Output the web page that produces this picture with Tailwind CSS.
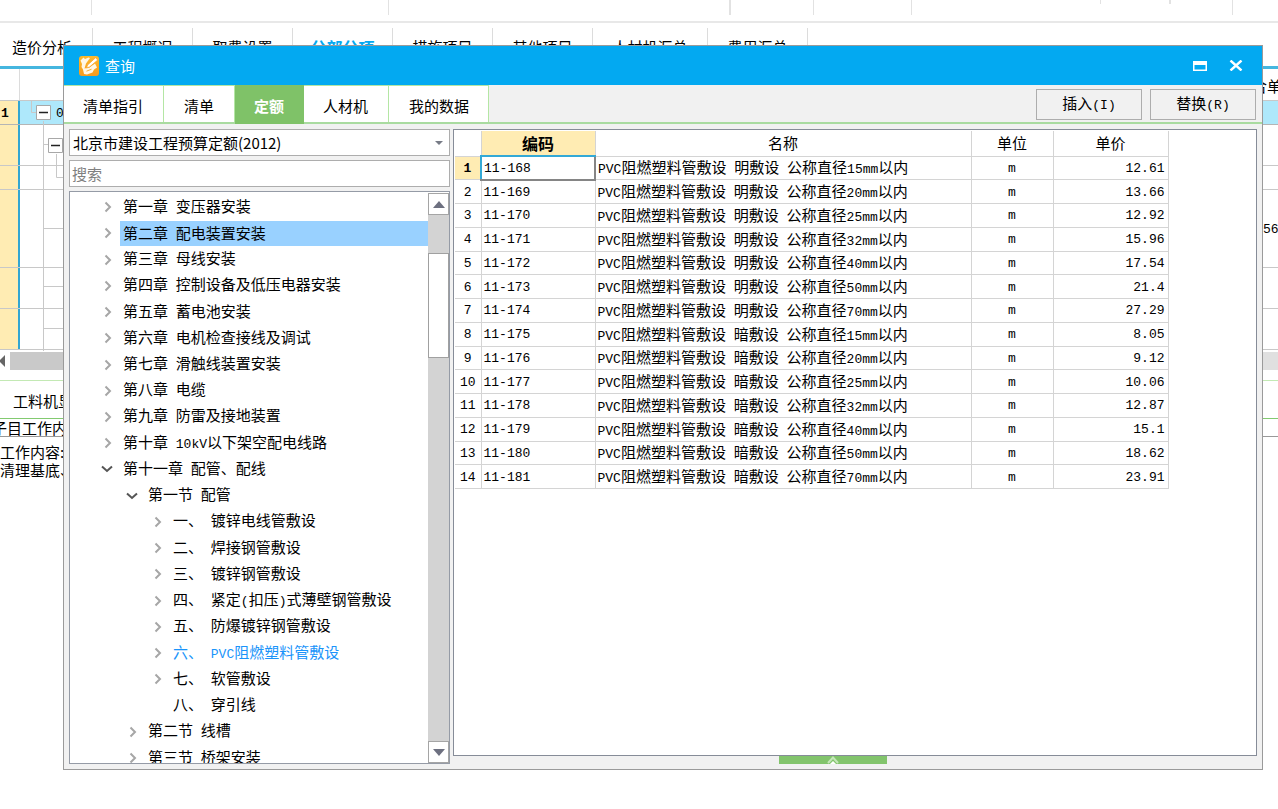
<!DOCTYPE html>
<html lang="zh-CN">
<head>
<meta charset="utf-8">
<title>查询</title>
<script src="https://cdn.jsdelivr.net/npm/@tailwindcss/browser@4"></script>
</head>
<body class="relative h-screen overflow-hidden bg-white font-['Noto_Sans_CJK_SC',sans-serif] text-[15px] leading-5 text-black">

<!-- Main window behind the dialog -->
<main class="flex h-full flex-col">
  <div class="relative h-[23px] shrink-0 border-b-2 border-[#e8e8e8]" aria-hidden="true">
    <svg class="absolute left-0 top-0" width="1278" height="15" fill="#e2e2e2">
      <path d="M91 0h1v15h-1zM388 0h1v15h-1zM729 0h2v15h-2zM813 0h1v15h-1zM911 0h1v15h-1zM1100 0h1v4h-1zM1169 0h2v4h-2zM1232 0h1v15h-1z"/>
    </svg>
  </div>
  <nav class="-ml-2 flex h-[43px] shrink-0 pt-[5px] whitespace-nowrap">
    <button class="w-[101px] border-r border-[#dcdcdc]">造价分析</button>
    <button class="w-[100px] border-r border-[#dcdcdc]">工程概况</button>
    <button class="w-[100px] border-r border-[#dcdcdc]">取费设置</button>
    <button class="w-[100px] border-r border-[#dcdcdc] text-base font-bold text-[#03a9f1]">分部分项</button>
    <button class="w-[100px] border-r border-[#dcdcdc]">措施项目</button>
    <button class="w-[100px] border-r border-[#dcdcdc]">其他项目</button>
    <button class="w-[115px] border-r border-[#dcdcdc]">人材机汇总</button>
    <button class="w-[100px] border-r border-[#dcdcdc]">费用汇总</button>
  </nav>
  <section class="relative shrink-0 border-t-3 border-[#45b6df]">
    <div class="flex h-8 border-b border-[#c8c8c8]">
      <div class="w-5 border-r border-[#dcdcdc]"></div>
      <div class="flex-1"></div>
      <div class="flex w-[41px] items-center whitespace-nowrap pt-0.5">综合单价</div>
    </div>
    <div class="flex h-6 border-b border-[#b5b5b5] bg-[#aee8fb]">
      <div class="flex w-5 items-center border-r-2 border-[#33a6d2] bg-[#ffecb3] pl-px pt-0.5 font-['Liberation_Mono',monospace] text-[13px] font-bold">1</div>
      <div class="flex flex-1 items-center pl-9 pt-0.5 font-['Liberation_Mono',monospace] text-[13px]">01</div>
    </div>
    <div class="flex h-[41px] border-b border-[#c8c8c8]"><div class="w-5 border-r-2 border-[#33a6d2] bg-[#ffecb3]"></div></div>
    <div class="flex h-6 border-b border-[#c8c8c8]"><div class="w-5 border-r-2 border-[#33a6d2] bg-[#ffecb3]"></div></div>
    <div class="flex h-[78px] items-stretch border-b border-[#c8c8c8]">
      <div class="w-5 border-r-2 border-[#33a6d2] bg-[#ffecb3]"></div>
      <div class="flex-1"></div>
      <div class="flex w-[15px] items-center pt-0.5 font-['Liberation_Mono',monospace] text-[13px]">56</div>
    </div>
    <div class="flex h-[41px] border-b border-[#c8c8c8]"><div class="w-5 border-r-2 border-[#33a6d2] bg-[#ffecb3]"></div></div>
    <div class="flex h-[41px] border-b border-[#c8c8c8]"><div class="w-5 border-r-2 border-[#33a6d2] bg-[#ffecb3]"></div></div>
    <svg class="absolute left-5 top-8" width="44" height="250" fill="none" stroke="#c8c8c8" aria-hidden="true">
      <path d="M11.500 0v11.500h5M23.500 20v230M24 43.500h6M36.500 53v23.500h8M24 127.500h20M24 185.500h20M24 227.500h20"/>
      <g stroke="#a8a8a8" fill="#fff"><path d="M16.500 4.500h14v14h-14zM28.500 37.500h14v14h-14z"/></g>
      <path stroke="#222" stroke-width="1.500" d="M19 11.500h9M31 44.500h9"/>
    </svg>
    <div class="mt-0.5 flex h-[18px] items-center bg-[#c9c9c9]">
      <div class="flex h-full w-2.5 items-center bg-white"><svg width="5" height="12" aria-hidden="true"><path d="M5 0v12L-1 6z" fill="#666"/></svg></div>
      <div class="flex-1"></div>
      <div class="h-full w-4 bg-[#e0e0e0]"></div>
    </div>
  </section>
  <section class="mt-[10px] border-t border-[#c3e9b4]">
    <div class="flex h-[38px] items-center border-b border-[#82ca70] pl-[13px] pt-0.5"><span>工料机显示</span></div>
    <div class="-ml-2 h-[18px] border-b border-[#999] leading-[18px]">子目工作内容</div>
    <div class="pt-1.5 leading-[18px]"><p>工作内容:</p><p>清理基底、</p></div>
  </section>
</main>

<!-- Query dialog -->
<div role="dialog" aria-labelledby="dlg-title" class="absolute bottom-[39px] left-[63px] right-[15px] top-[45px] flex flex-col border border-[#9a9a9a] bg-[#f1f1f1]">
  <header class="flex h-[39px] shrink-0 items-center bg-[#03a9f1] pl-[15px] pr-[19px] text-white">
    <svg width="20" height="20" viewBox="0 0 20 20" aria-hidden="true">
      <defs><linearGradient id="lg" x2="0" y2="1"><stop stop-color="#fcb92a"/><stop offset="1" stop-color="#f79a1e"/></linearGradient></defs>
      <rect width="20" height="20" rx="3" fill="url(#lg)"/>
      <path d="M1.500 4.500 4.500 1.500 6 3 9.500 1.500 11 2 7 7.500 5.500 12.500 10.500 11.500 16 7.500 18 11.500 15 13.500 13.500 16.500 8 18.500 5 18 4 13.500 2.500 11 3 8z" fill="#fff6e4"/>
      <path d="M16.500 1.800 18.800 4 10.500 11 7.500 12 8.500 9z" fill="#fff" stroke="#f7a32a" stroke-width=".8"/>
      <path d="M7.500 15.200 12.500 13.200" stroke="#f9ad35" stroke-width="1"/>
    </svg>
    <h1 id="dlg-title" class="ml-1.5 flex-1">查询</h1>
    <button aria-label="最大化" class="mr-[22px]"><svg width="14" height="10"><path d="M.75.750h12.500v8.500H.75z" fill="none" stroke="#fff" stroke-width="1.500"/><path d="M0 0h14v4H0z" fill="#fff"/></svg></button>
    <button aria-label="关闭"><svg width="14" height="11"><path d="M1.500.500 12.500 10.500M12.500.500 1.500 10.500" stroke="#fff" stroke-width="2.400"/></svg></button>
  </header>
  <div class="flex h-[39px] shrink-0 items-stretch border-b-2 border-[#a9dba0]">
    <button class="border-r border-t border-[#b4e6a4] bg-white pl-[19px] pr-5 pt-1">清单指引</button>
    <button class="border-r border-t border-[#b4e6a4] bg-white px-5 pt-1">清单</button>
    <button class="-mb-0.5 bg-[#7fc268] pl-[19px] pr-5 pb-0.5 pt-1 font-bold text-white">定额</button>
    <button class="border-r border-t border-[#b4e6a4] bg-white pl-[19px] pr-5 pt-1">人材机</button>
    <button class="border-r border-t border-[#b4e6a4] bg-white pl-5 pr-[19px] pt-1">我的数据</button>
    <div class="flex flex-1 justify-end gap-2 pb-0.5 pr-1.5 pt-1">
      <button class="w-[106px] border border-[#adadad]">插入<span class="font-['Liberation_Mono',monospace] text-[13px]">(I)</span></button>
      <button class="w-[106px] border border-[#adadad]">替换<span class="font-['Liberation_Mono',monospace] text-[13px]">(R)</span></button>
    </div>
  </div>
  <div class="flex min-h-0 flex-1 gap-[3px] p-[5px]">
    <aside class="flex w-[381px] shrink-0 flex-col">
      <div class="relative h-[27px] shrink-0">
        <select aria-label="定额库" class="block h-full w-full appearance-none border border-[#adadad] bg-white pl-[3px] leading-5"><option>北京市建设工程预算定额(2012)</option></select>
        <svg class="pointer-events-none absolute right-[7px] top-3" width="8" height="4" aria-hidden="true"><path d="M0 0h8L4 4z" fill="#777b86"/></svg>
      </div>
      <input type="text" aria-label="搜索" placeholder="搜索" class="mt-1 h-[27px] shrink-0 border border-[#adadad] bg-white pl-[2px] placeholder:text-[#808080]">
      <div class="mt-1 flex min-h-0 flex-1 border border-[#959ba6] bg-white pt-px">
        <div class="min-w-0 flex-1 overflow-hidden"><ul id="tree" class="flex h-[578px] flex-col pt-px"></ul></div>
        <div class="flex w-[21px] shrink-0 flex-col bg-[#d3d3d3]">
          <button aria-label="向上" class="flex h-[22px] items-center justify-center border border-[#a5a5a5] bg-white"><svg width="12" height="7"><path d="M6 0l6 7H0z" fill="#6d7080"/></svg></button>
          <div class="mt-[38px] h-[105px] border border-[#a0a0a0] bg-white"></div>
          <div class="flex-1"></div>
          <button aria-label="向下" class="flex h-[22px] items-center justify-center border border-[#a5a5a5] bg-white"><svg width="12" height="7"><path d="M0 0h12L6 7z" fill="#6d7080"/></svg></button>
        </div>
      </div>
    </aside>
    <div class="flex min-w-0 flex-1 flex-col">
      <div class="min-h-0 flex-1 border border-[#868c98] bg-white pl-px pt-px">
        <table class="h-[358px] w-[713px] table-fixed border-collapse leading-4">
          <colgroup><col class="w-[26px]"><col class="w-[114px]"><col class="w-[376px]"><col class="w-[82px]"><col class="w-[115px]"></colgroup>
          <thead><tr class="h-[25px]">
            <th class="border border-l-0 border-t-0 border-[#d4d4d4]"></th>
            <th class="border-b-2 border-r border-b-[#33a9d6] border-r-[#d4d4d4] bg-[#ffecb3] p-0 text-base leading-5 font-bold">编码</th>
            <th class="border border-t-0 border-[#d4d4d4] p-0 font-normal">名称</th>
            <th class="border border-t-0 border-[#d4d4d4] p-0 font-normal">单位</th>
            <th class="border border-t-0 border-[#d4d4d4] p-0 font-normal">单价</th>
          </tr></thead>
          <tbody id="rows"></tbody>
        </table>
      </div>
      <div class="flex h-2 shrink-0 justify-center">
        <button aria-label="展开" class="mr-[44px] flex w-[108px] justify-center bg-[#82c46c]"><svg width="12" height="8"><path d="M1 7 6 1.500 11 7" fill="none" stroke="#c5e6b9" stroke-width="2"/><path d="M6 5l3 3H3z" fill="#fff"/></svg></button>
      </div>
    </div>
  </div>
</div>

<script>
  // Latin runs and spaces use a half-width monospaced face inside Chinese text.
  function mixed(text) {
    return text.replace(/[\x20-\x7e]+/g, '<span class="whitespace-pre font-[\'Liberation_Mono\',monospace] text-[13px]">$&</span>');
  }
  const closed = '<svg width="8" height="12" fill="none" stroke="#a6a6a6" stroke-width="2"><path d="M1.500 1.500 6 6 1.500 10.500"/></svg>';
  const open = '<svg width="12" height="8" fill="none" stroke="#555" stroke-width="2"><path d="M1 1.500 6 6 11 1.500"/></svg>';
  const pad = { 1: 'pl-[31px]', 2: 'pl-14', 3: 'pl-[81px]' };
  const tree = [
    [1, '第一章 变压器安装'], [1, '第二章 配电装置安装', 'sel'], [1, '第三章 母线安装'],
    [1, '第四章 控制设备及低压电器安装'], [1, '第五章 蓄电池安装'], [1, '第六章 电机检查接线及调试'],
    [1, '第七章 滑触线装置安装'], [1, '第八章 电缆'], [1, '第九章 防雷及接地装置'],
    [1, '第十章 10kV以下架空配电线路'], [1, '第十一章 配管、配线', 'open'], [2, '第一节 配管', 'open'],
    [3, '一、 镀锌电线管敷设'], [3, '二、 焊接钢管敷设'], [3, '三、 镀锌钢管敷设'],
    [3, '四、 紧定(扣压)式薄壁钢管敷设'], [3, '五、 防爆镀锌钢管敷设'], [3, '六、 PVC阻燃塑料管敷设', 'cur'],
    [3, '七、 软管敷设'], [3, '八、 穿引线', 'leaf'], [2, '第二节 线槽'], [2, '第三节 桥架安装']
  ];
  document.getElementById('tree').innerHTML = tree.map(([lv, t, s]) =>
    `<li class="flex min-h-0 flex-1 items-center whitespace-nowrap ${pad[lv]}"><span class="flex w-[19px] shrink-0 justify-start">${
      s === 'open' ? open : s === 'leaf' ? '' : '<span class="pl-[3px]">' + closed + '</span>'
    }</span><span class="${s === 'sel' ? 'h-[25px] flex-1 bg-[#99d1ff] pl-[3px] leading-6' : s === 'cur' ? 'pl-[3px] text-[#1a94fa]' : 'pl-[3px]'}">${mixed(t)}</span></li>`).join('');

  const kinds = ['明', '明', '明', '明', '明', '明', '明', '暗', '暗', '暗', '暗', '暗', '暗', '暗'];
  const sizes = [15, 20, 25, 32, 40, 50, 70];
  const prices = ['12.61', '13.66', '12.92', '15.96', '17.54', '21.4', '27.29', '8.05', '9.12', '10.06', '12.87', '15.1', '18.62', '23.91'];
  document.getElementById('rows').innerHTML = prices.map((p, i) =>
    `<tr><td class="border border-l-0 border-[#d4d4d4] p-0 pt-0.5 text-center font-['Liberation_Mono',monospace] text-[13px] ${i ? '' : 'bg-[#ffecb3] font-bold'}">${i + 1}</td>
     <td class="p-0 pl-0.5 pt-0.5 font-['Liberation_Mono',monospace] text-[13px] ${i ? 'border border-[#d4d4d4]' : 'border-b-2 border-l-2 border-r-2 border-b-[#858585] border-l-[#33a9d6] border-r-[#858585]'}">11-${168 + i}</td>
     <td class="border border-[#d4d4d4] p-0 pl-0.5 pt-0.5 whitespace-nowrap">${mixed('PVC阻燃塑料管敷设 ' + kinds[i] + '敷设 公称直径' + sizes[i % 7] + 'mm以内')}</td>
     <td class="border border-[#d4d4d4] p-0 pt-0.5 text-center font-['Liberation_Mono',monospace] text-[13px]">m</td>
     <td class="border border-[#d4d4d4] p-0 pr-[3px] pt-0.5 text-right font-['Liberation_Mono',monospace] text-[13px]">${p}</td></tr>`).join('');
</script>
</body>
</html>
